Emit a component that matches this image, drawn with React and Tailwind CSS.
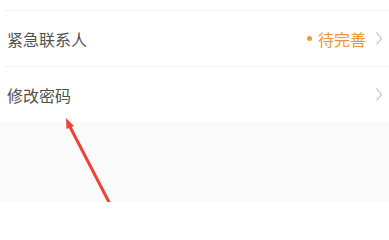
import React from "react";

const rows = [
  { label: "紧急联系人", status: "待完善" },
  { label: "修改密码" },
];

function Chevron() {
  return (
    <svg width="8" height="15" viewBox="0 0 8 15" className="shrink-0">
      <path d="M1.5 1.5 L6.5 7.5 L1.5 13.5" fill="none" stroke="#cccccc" strokeWidth="1.2" />
    </svg>
  );
}

export default function App() {
  return (
    <div
      className="relative w-[389px] h-[202px] overflow-hidden bg-[#fafafa]"
      style={{ fontFamily: '"Noto Sans CJK SC", "Noto Sans", sans-serif' }}
    >
      <div className="bg-white">
        <div className="h-[10px]" />
        {rows.map((r) => (
          <div key={r.label} className="ml-[4px] border-t border-[#f2f2f2]">
            <div className="flex items-center h-[55px] pl-[3px] pr-[6px]">
              <span className="flex-1 text-[16px] text-[#505050]">{r.label}</span>
              {r.status && (
                <div className="flex items-center mr-[9px]">
                  <span className="w-[5px] h-[5px] rounded-full bg-[#eb9a3c] mr-[6px]" />
                  <span className="text-[16px] text-[#e8973f]">{r.status}</span>
                </div>
              )}
              <Chevron />
            </div>
          </div>
        ))}
      </div>

      {/* red annotation arrow */}
      <svg className="absolute left-0 top-0" width="389" height="202" viewBox="0 0 389 202">
        <line x1="68" y1="123" x2="110" y2="204" stroke="#ec4336" strokeWidth="3" />
        <path d="M66 118 L74 126 L66.5 129 Z" fill="#ec4336" />
      </svg>
    </div>
  );
}
